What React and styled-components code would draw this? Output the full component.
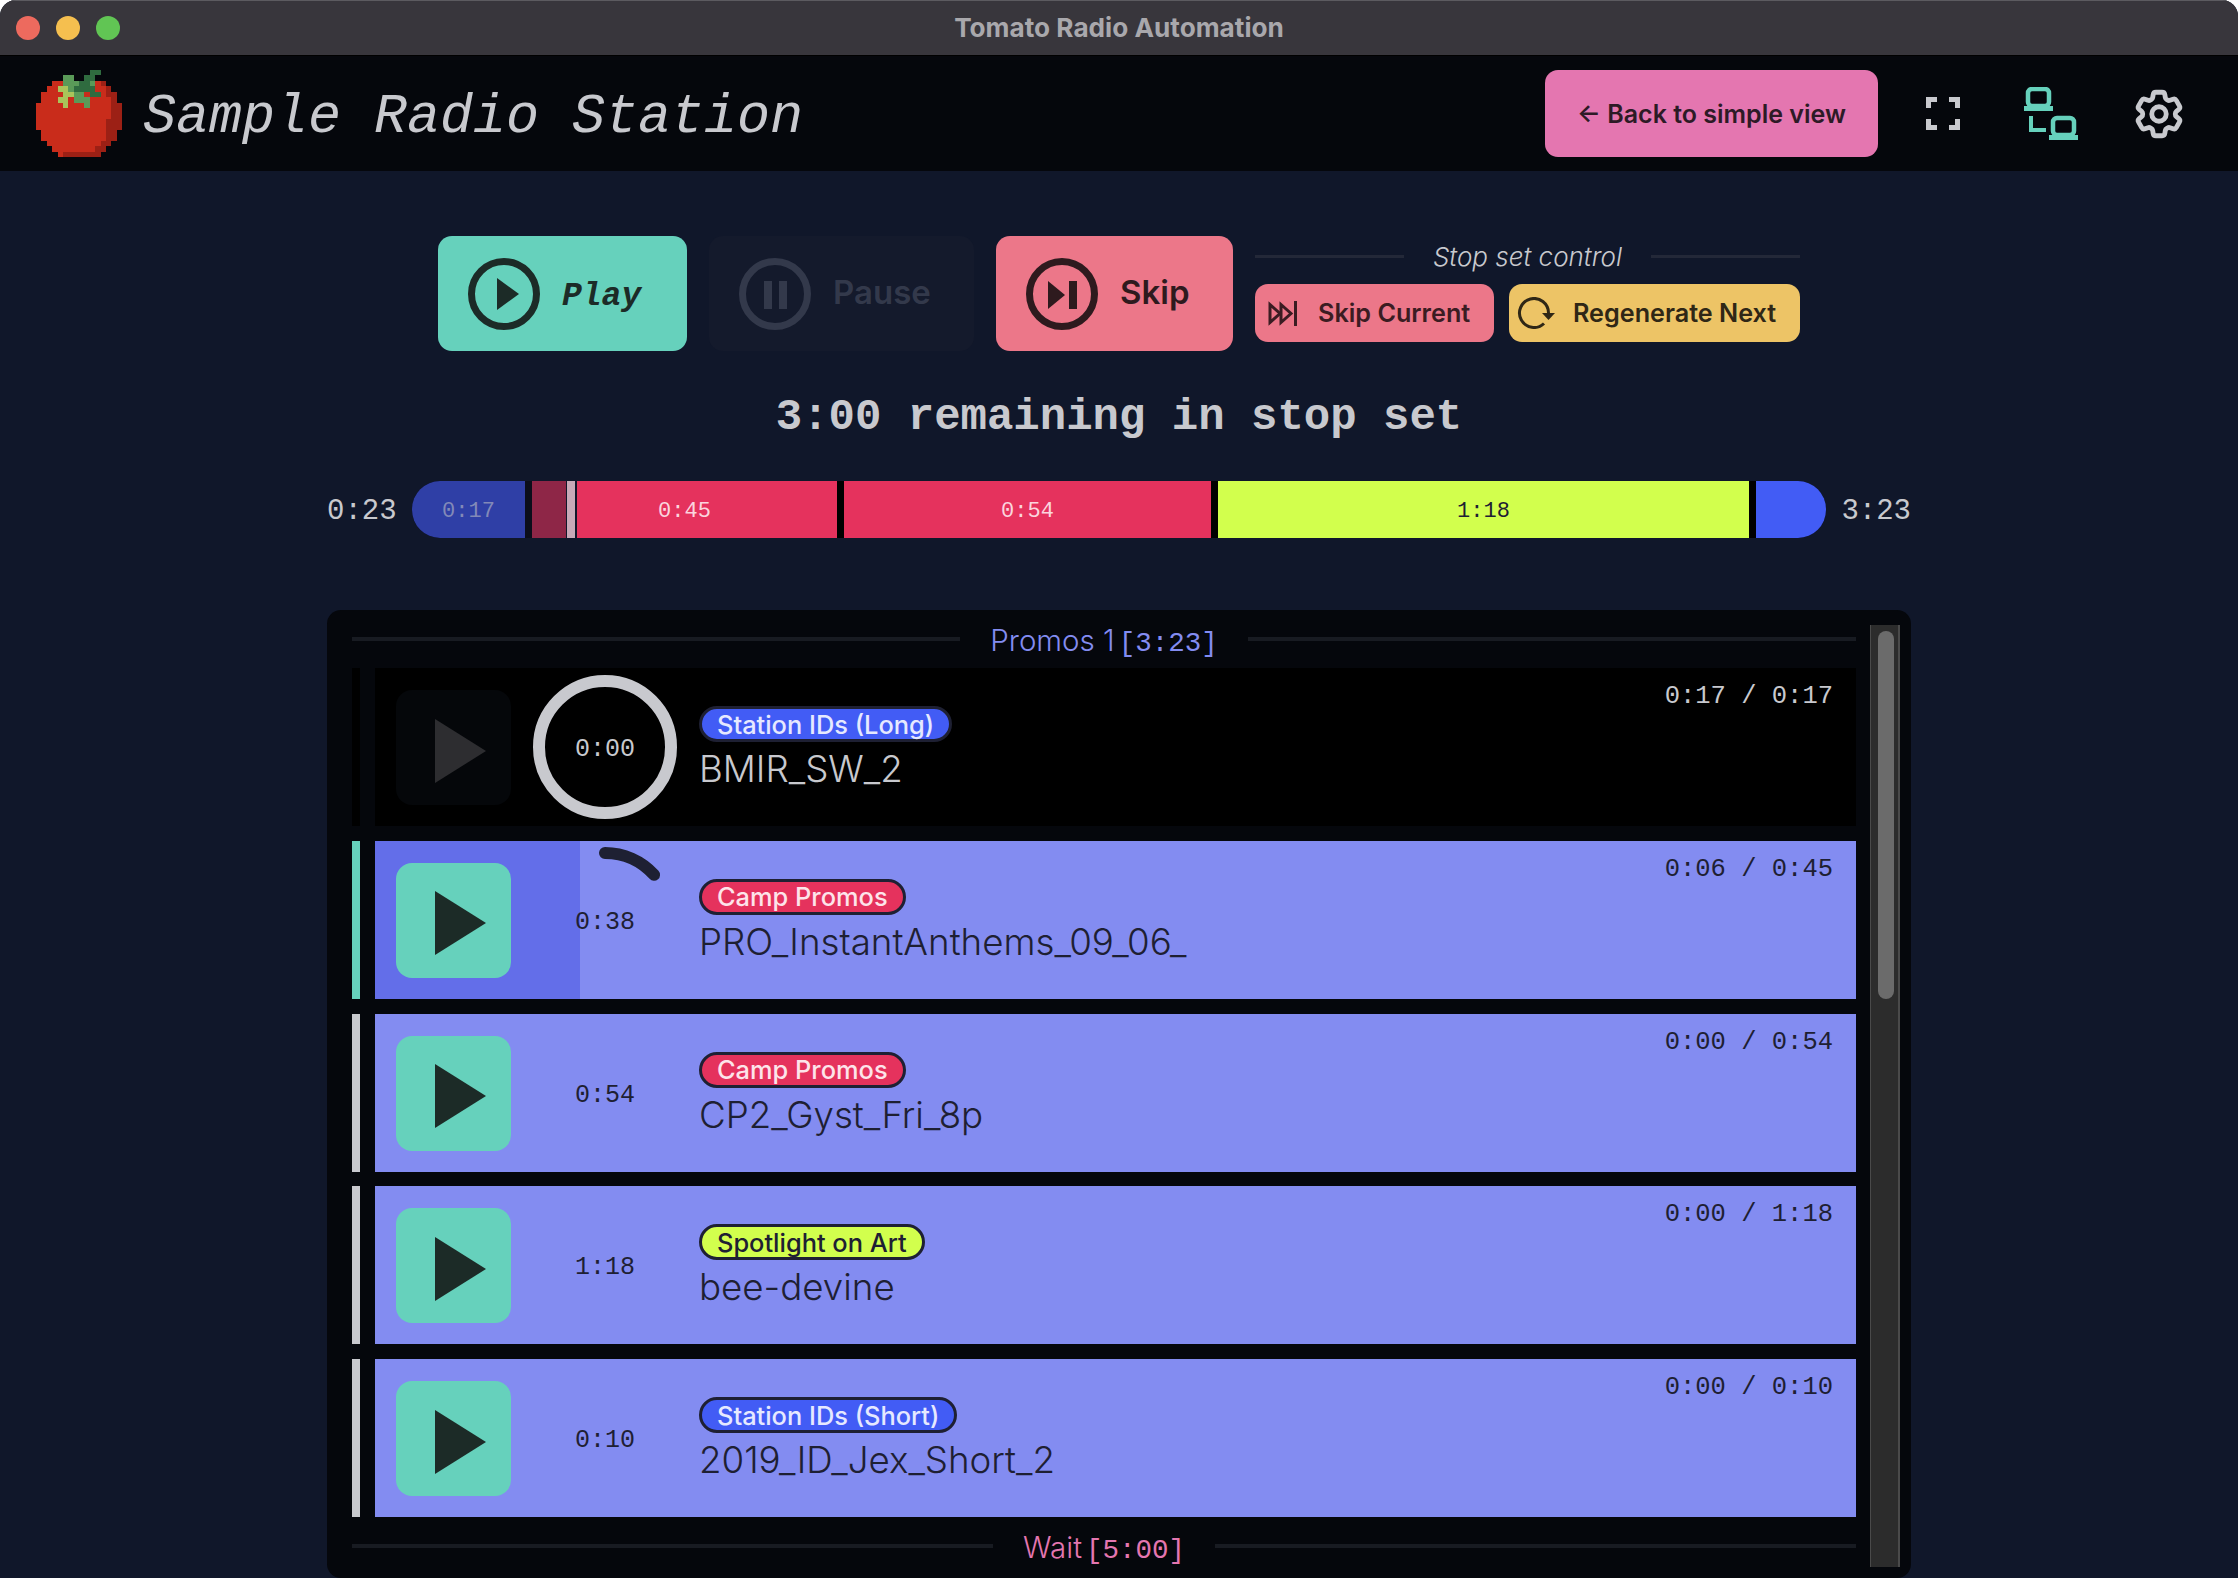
import React from "react";
import styled, { createGlobalStyle } from "styled-components";
import { HiOutlineCog6Tooth } from "react-icons/hi2";

const MONO = `"Liberation Mono", "DejaVu Sans Mono", monospace`;
const SANS = `Inter, "Noto Sans", sans-serif`;
const LIGHT = "#c8c9ce";
const TEAL = "#66d1bc";
const ROSE = "#ec7789";
const PINK = "#e476b0";
const RED = "#e5325d";
const BLUE = "#425cf5";
const LIME = "#d2ff4d";
const PERI = "#838cf1";
const INK = "#1e2033";

const Global = createGlobalStyle`
  html, body { margin: 0; padding: 0; background: #ffffff; }
  * { box-sizing: border-box; }
`;

const Window = styled.div`
  width: 2238px;
  height: 1578px;
  overflow: hidden;
  border-radius: 16px 16px 0 0;
  background: #10172a;
  display: flex;
  flex-direction: column;
  font-family: ${SANS};
`;

const TitleBar = styled.div`
  position: relative;
  height: 56px;
  flex: none;
  display: flex;
  align-items: center;
  justify-content: center;
  padding-bottom: 2px;
  background: #38363c;
  border-top: 1px solid #5c5b60;
  border-bottom: 1px solid #000;
`;

const Lights = styled.div`
  position: absolute;
  left: 16px;
  top: 15px;
  display: flex;
  gap: 16px;
`;

const Light = styled.span`
  width: 24px;
  height: 24px;
  border-radius: 50%;
  background: ${(p) => p.$c};
`;

const WindowTitle = styled.div`
  font-size: 26.2px;
  font-weight: 700;
  color: #a9a8ac;
`;

const Header = styled.header`
  height: 115px;
  flex: none;
  background: #05070c;
  display: flex;
  align-items: center;
  padding: 0 25px 0 36px;
`;

const Tomato = styled.svg`
  width: 86px;
  height: 87px;
  flex: none;
  margin-top: -1px;
  shape-rendering: crispEdges;
`;

const Station = styled.h1`
  margin: 8px 0 0 21px;
  font-family: ${MONO};
  font-style: italic;
  font-weight: 400;
  font-size: 55px;
  color: ${LIGHT};
  white-space: nowrap;
`;

const BackButton = styled.button`
  margin-left: auto;
  margin-right: 11px;
  width: 333px;
  height: 87px;
  border: 0;
  border-radius: 13px;
  background: ${PINK};
  color: #2d1a26;
  font-family: ${SANS};
  font-size: 25px;
  font-weight: 600;
  white-space: nowrap;
`;

const IconBox = styled.div`
  width: 108px;
  height: 108px;
  display: flex;
  align-items: center;
  justify-content: center;
  color: ${LIGHT};
`;

const GearBox = styled(IconBox)`
  svg path {
    stroke-width: 2;
  }
`;

const Main = styled.main`
  flex: 1;
  display: flex;
  flex-direction: column;
  align-items: center;
  padding-top: 65px;
  min-height: 0;
`;

const Controls = styled.div`
  display: flex;
  gap: 22px;
  align-items: flex-start;
`;

const BigButton = styled.button`
  width: ${(p) => p.$w}px;
  height: 115px;
  border: 0;
  border-radius: 14px;
  padding: 0 0 0 30px;
  display: flex;
  align-items: center;
  gap: 22px;
  background: ${(p) => p.$bg};
  color: ${(p) => p.$fg};
  font-family: ${SANS};
  font-size: 33px;
  font-weight: 600;
`;

const BigLabel = styled.span`
  margin-bottom: 3px;
`;

const PlayLabel = styled.span`
  margin-top: 5px;
  font-family: ${MONO};
  font-style: italic;
  font-weight: 700;
  font-size: 33px;
`;

const StopSet = styled.div`
  width: 545px;
  display: flex;
  flex-direction: column;
  gap: 8px;
`;

const Legend = styled.div`
  height: 40px;
  display: flex;
  align-items: center;
  gap: 29px;
  color: ${LIGHT};
  font-size: 26px;
  font-weight: 300;
  font-style: italic;
  white-space: nowrap;
`;

const Rule = styled.i`
  flex: 1;
  height: ${(p) => p.$h || 3}px;
  background: ${(p) => p.$c || "#232838"};
`;

const SmallRow = styled.div`
  display: flex;
  gap: 15px;
`;

const SmallButton = styled.button`
  width: ${(p) => p.$w}px;
  height: 58px;
  border: 0;
  border-radius: 13px;
  padding: 0 0 0 ${(p) => p.$pl}px;
  display: flex;
  align-items: center;
  gap: ${(p) => p.$gap}px;
  background: ${(p) => p.$bg};
  color: ${(p) => p.$fg};
  font-family: ${SANS};
  font-size: 25.2px;
  font-weight: 600;
  white-space: nowrap;
`;

const Remaining = styled.div`
  margin-top: 36px;
  height: 60px;
  line-height: 60px;
  font-family: ${MONO};
  font-weight: 700;
  font-size: 44px;
  color: ${LIGHT};
  white-space: nowrap;
`;

const BarRow = styled.div`
  margin-top: 34px;
  width: 1584px;
  display: flex;
  align-items: center;
`;

const BarTime = styled.div`
  width: ${(p) => p.$w}px;
  flex: none;
  padding-top: 4px;
  font-family: ${MONO};
  font-size: 29px;
  color: ${LIGHT};
  text-align: ${(p) => p.$a};
`;

const Bar = styled.div`
  width: 1414px;
  height: 57px;
  flex: none;
  display: flex;
  background: #000;
  border-radius: 28px;
  overflow: hidden;
`;

const Seg = styled.div`
  position: relative;
  width: ${(p) => p.$w}px;
  flex: none;
  margin-right: ${(p) => p.$gap || 0}px;
  padding-top: 3px;
  display: flex;
  align-items: center;
  justify-content: center;
  background: ${(p) => p.$bg};
  color: ${(p) => p.$fg};
  font-family: ${MONO};
  font-size: 22px;
`;

const SegText = styled.span`
  position: relative;
`;

const Played = styled.div`
  position: absolute;
  left: 0;
  top: 0;
  bottom: 0;
  width: 34px;
  background: #8e2647;
`;

const Marker = styled.div`
  position: absolute;
  left: 34px;
  top: 0;
  bottom: 0;
  width: 11px;
  background: #c8a9b8;
  border-left: 1px solid #10172a;
  border-right: 2px solid #10172a;
`;

const GapFill = styled.div`
  width: 7px;
  flex: none;
  background: #0b0e1b;
`;

const Panel = styled.section`
  margin-top: 72px;
  width: 1584px;
  flex: 1;
  min-height: 0;
  padding: 0 11px 11px 25px;
  background: #05070c;
  border-radius: 14px;
  display: flex;
  gap: 14px;
  overflow: hidden;
`;

const List = styled.div`
  width: 1504px;
  flex: none;
  display: flex;
  flex-direction: column;
`;

const SectionHead = styled.div`
  height: 58px;
  flex: none;
  display: flex;
  align-items: center;
  gap: 30px;
  color: ${(p) => p.$c};
  font-size: 29.5px;
  font-weight: 300;
  white-space: nowrap;
`;

const SectionLabel = styled.span`
  padding-top: 2px;
`;

const SectionMono = styled.span`
  font-family: ${MONO};
  font-size: 27.5px;
  margin-left: 4px;
`;

const Rows = styled.div`
  display: flex;
  flex-direction: column;
  gap: 14.75px;
`;

const Row = styled.div`
  height: 158px;
  display: flex;
  gap: 15px;
`;

const Stripe = styled.div`
  width: 8px;
  flex: none;
  background: ${(p) => p.$c};
`;

const Body = styled.div`
  position: relative;
  flex: 1;
  display: flex;
  padding-left: 21px;
  background: ${(p) => (p.$dark ? "#000" : PERI)};
  color: ${(p) => (p.$dark ? LIGHT : INK)};
`;

const Fill = styled.div`
  position: absolute;
  left: 0;
  top: 0;
  bottom: 0;
  background: #636ee9;
`;

const RowPlay = styled.button`
  position: relative;
  width: 115px;
  height: 115px;
  margin-top: 22px;
  flex: none;
  border: 0;
  padding: 0;
  border-radius: 16px;
  background: ${(p) => (p.$dark ? "#05070a" : TEAL)};
  display: flex;
  align-items: center;
  justify-content: center;
`;

const Dial = styled.div`
  position: relative;
  width: 144px;
  height: 144px;
  margin: 6.5px 22px 0;
  flex: none;
  padding-top: 6px;
  display: flex;
  align-items: center;
  justify-content: center;
  font-family: ${MONO};
  font-size: 25px;
`;

const DialRing = styled.svg`
  position: absolute;
  inset: 0;
`;

const DialText = styled.span`
  position: relative;
`;

const Info = styled.div`
  position: relative;
  padding-top: 38px;
  display: flex;
  flex-direction: column;
  align-items: flex-start;
  gap: 6px;
`;

const Tag = styled.span`
  height: 36px;
  padding: 0 15px;
  display: inline-flex;
  align-items: center;
  border: 3px solid ${INK};
  border-radius: 18px;
  background: ${(p) => p.$bg};
  color: ${(p) => p.$fg};
  font-size: 25.4px;
  font-weight: 500;
  white-space: nowrap;
`;

const Name = styled.div`
  font-size: 36.7px;
  font-weight: 300;
  line-height: 42px;
  white-space: nowrap;
`;

const RowTime = styled.div`
  position: relative;
  margin-left: auto;
  padding: 12px 23px 0 0;
  font-family: ${MONO};
  font-size: 25.5px;
  line-height: 34px;
  white-space: pre;
`;

const Track = styled.div`
  width: 30px;
  margin-top: 15px;
  flex: none;
  padding: 6px 7px 0;
  background: #2c2c2c;
  border-left: 1px solid #4a4a4a;
  border-right: 2px solid #4a4a4a;
`;

const Thumb = styled.div`
  width: 16px;
  height: 368px;
  border-radius: 8px;
  background: #6b6b6b;
`;

const TOMATO = [
  "..........DD....",
  ".....GG..DD.....",
  "...RRGGGDDGRX...",
  "..RRYYGDDDDRRX..",
  ".RRRRYYGGRDDRXX.",
  ".RRRYYRGGGRRRRX.",
  "RRRRRYRRRGRRRRXX",
  "RRRRRRRRRRRRRRXX",
  "RRRRRRRRRRRRRRXX",
  "RRRRRRRRRRRRRXXX",
  "RRRRRRRRRRRRRXXX",
  ".RRRRRRRRRRRRXX.",
  ".RRRRRRRRRRRRXX.",
  "..RRRRRRRRRRXX..",
  "...RRRRRRRRXX...",
  "....RXXXXXXX....",
];
const TC = { R: "#c92c1b", X: "#9c2015", G: "#5a9a58", D: "#2f6b3f", Y: "#a9c55a" };

const TomatoIcon = () => (
  <Tomato viewBox="0 0 16 16" preserveAspectRatio="none">
    {TOMATO.flatMap((line, y) =>
      [...line].map((ch, x) =>
        ch === "." ? null : <rect key={`${x}-${y}`} x={x} y={y} width="1" height="1" fill={TC[ch]} />
      )
    )}
  </Tomato>
);

const FullscreenIcon = () => (
  <svg width="34" height="33" viewBox="0 0 34 33" fill="none" stroke="currentColor" strokeWidth="5">
    <path d="M2.5 11V2.5H11M23 2.5H31.5V11M2.5 22V30.5H11M23 30.5H31.5V22" />
  </svg>
);

const Computer = ({ x, y }) => (
  <g transform={`translate(${x} ${y})`}>
    <rect x="4" y="2" width="21" height="17" rx="4" fill="none" stroke={TEAL} strokeWidth="4.5" />
    <rect x="0" y="19" width="29" height="5" fill={TEAL} />
  </g>
);

const NetworkIcon = () => (
  <svg width="54" height="53" viewBox="0 0 54 53" fill="none">
    <Computer x={0} y={0} />
    <Computer x={25} y={29} />
    <path d="M7 29V43H22" stroke={TEAL} strokeWidth="4" />
  </svg>
);

const CircleIcon = ({ c, children }) => (
  <svg width="72" height="72" viewBox="0 0 72 72" style={{ flex: "none" }}>
    <circle cx="36" cy="36" r="32.5" fill="none" stroke={c} strokeWidth="7" />
    <g fill={c}>{children}</g>
  </svg>
);

const SkipCurrentIcon = ({ c }) => (
  <svg width="29" height="25" viewBox="0 0 29 25" fill="none" stroke={c} strokeWidth="3" style={{ flex: "none" }}>
    <path d="M2 3.5L12 12.5L2 21.5Z" />
    <path d="M13 3.5L23 12.5L13 21.5Z" />
    <path d="M27.5 0V25" strokeWidth="3" />
  </svg>
);

const RegenIcon = ({ c }) => (
  <svg width="38" height="32" viewBox="0 0 38 32" fill="none" style={{ flex: "none" }}>
    <path d="M31.5 16A14.5 14.5 0 1 0 27 26.5" stroke={c} strokeWidth="3" />
    <path d="M25 16H38L31.5 23Z" fill={c} />
  </svg>
);

const Triangle = ({ c }) => (
  <svg width="51" height="64" viewBox="0 0 51 64" style={{ marginLeft: 13, marginTop: 6 }}>
    <path d="M0 0L51 32L0 64Z" fill={c} />
  </svg>
);

const ITEMS = [
  { stripe: "#000", dark: true, tag: "Station IDs (Long)", bg: BLUE, fg: "#e6e9ff", name: "BMIR_SW_2", left: "0:00", time: "0:17 / 0:17", arc: 360 },
  { stripe: TEAL, tag: "Camp Promos", bg: RED, fg: "#fde4ea", name: "PRO_InstantAnthems_09_06_", left: "0:38", time: "0:06 / 0:45", arc: 48, fill: 205 },
  { stripe: LIGHT, tag: "Camp Promos", bg: RED, fg: "#fde4ea", name: "CP2_Gyst_Fri_8p", left: "0:54", time: "0:00 / 0:54" },
  { stripe: LIGHT, tag: "Spotlight on Art", bg: LIME, fg: INK, name: "bee-devine", left: "1:18", time: "0:00 / 1:18" },
  { stripe: LIGHT, tag: "Station IDs (Short)", bg: BLUE, fg: "#e6e9ff", name: "2019_ID_Jex_Short_2", left: "0:10", time: "0:00 / 0:10" },
];

const arcPath = (deg) => {
  const r = (deg * Math.PI) / 180;
  return `M72 6A66 66 0 0 1 ${72 + 66 * Math.sin(r)} ${72 - 66 * Math.cos(r)}`;
};

const Ring = ({ item }) =>
  item.arc === 360 ? (
    <DialRing width="144" height="144" viewBox="0 0 144 144">
      <circle cx="72" cy="72" r="66" fill="none" stroke={LIGHT} strokeWidth="12" />
    </DialRing>
  ) : item.arc ? (
    <DialRing width="144" height="144" viewBox="0 0 144 144">
      <path d={arcPath(item.arc)} fill="none" stroke={INK} strokeWidth="12" strokeLinecap="round" />
    </DialRing>
  ) : null;

const Item = ({ item }) => (
  <Row>
    <Stripe $c={item.stripe} />
    <Body $dark={item.dark}>
      {item.fill ? <Fill style={{ width: item.fill }} /> : null}
      <RowPlay $dark={item.dark}>
        <Triangle c={item.dark ? "#2d2d30" : "#1c2b27"} />
      </RowPlay>
      <Dial>
        <Ring item={item} />
        <DialText>{item.left}</DialText>
      </Dial>
      <Info>
        <Tag $bg={item.bg} $fg={item.fg}>{item.tag}</Tag>
        <Name>{item.name}</Name>
      </Info>
      <RowTime>{item.time}</RowTime>
    </Body>
  </Row>
);

export default function App() {
  return (
    <Window>
      <Global />
      <TitleBar>
        <Lights>
          <Light $c="#ed6a5e" />
          <Light $c="#f5bf4f" />
          <Light $c="#61c554" />
        </Lights>
        <WindowTitle>Tomato Radio Automation</WindowTitle>
      </TitleBar>
      <Header>
        <TomatoIcon />
        <Station>Sample Radio Station</Station>
        <BackButton>← Back to simple view</BackButton>
        <IconBox><FullscreenIcon /></IconBox>
        <IconBox><NetworkIcon /></IconBox>
        <GearBox><HiOutlineCog6Tooth size={58} /></GearBox>
      </Header>
      <Main>
        <Controls>
          <BigButton $w={249} $bg={TEAL} $fg="#1c2b27">
            <CircleIcon c="#1c2b27"><path d="M29 20L51 36L29 52Z" /></CircleIcon>
            <PlayLabel>Play</PlayLabel>
          </BigButton>
          <BigButton $w={265} $bg="#141a2c" $fg="#33394b">
            <CircleIcon c="#33394b">
              <rect x="25" y="23" width="8" height="28" />
              <rect x="40" y="23" width="8" height="28" />
            </CircleIcon>
            <BigLabel>Pause</BigLabel>
          </BigButton>
          <BigButton $w={237} $bg={ROSE} $fg="#2e1a1e">
            <CircleIcon c="#2e1a1e">
              <path d="M22 23L39 37L22 51Z" />
              <rect x="43" y="23" width="8" height="28" />
            </CircleIcon>
            <BigLabel>Skip</BigLabel>
          </BigButton>
          <StopSet>
            <Legend>
              <Rule />
              Stop set control
              <Rule />
            </Legend>
            <SmallRow>
              <SmallButton $w={239} $pl={13} $gap={21} $bg={ROSE} $fg="#3b1c22">
                <SkipCurrentIcon c="#3b1c22" />
                Skip Current
              </SmallButton>
              <SmallButton $w={291} $pl={8} $gap={18} $bg="#edc466" $fg="#2f2716">
                <RegenIcon c="#2f2716" />
                Regenerate Next
              </SmallButton>
            </SmallRow>
          </StopSet>
        </Controls>
        <Remaining>3:00 remaining in stop set</Remaining>
        <BarRow>
          <BarTime $w={85} $a="left">0:23</BarTime>
          <Bar>
            <Seg $w={113} $bg="#2f3fa6" $fg="#8289b8">0:17</Seg>
            <GapFill />
            <Seg $w={305} $gap={7} $bg={RED} $fg="#fbd5de">
              <Played />
              <Marker />
              <SegText>0:45</SegText>
            </Seg>
            <Seg $w={367} $gap={7} $bg={RED} $fg="#fbd5de">0:54</Seg>
            <Seg $w={531} $gap={7} $bg={LIME} $fg={INK}>1:18</Seg>
            <Seg $w={70} $bg={BLUE} />
          </Bar>
          <BarTime $w={85} $a="right">3:23</BarTime>
        </BarRow>
        <Panel>
          <List>
            <SectionHead $c={PERI}>
              <Rule $h={4} $c="#181b22" />
              <SectionLabel>Promos 1<SectionMono>[3:23]</SectionMono></SectionLabel>
              <Rule $h={4} $c="#181b22" />
            </SectionHead>
            <Rows>
              {ITEMS.map((it) => <Item key={it.name} item={it} />)}
            </Rows>
            <SectionHead $c={PINK}>
              <Rule $h={4} $c="#181b22" />
              <SectionLabel>Wait<SectionMono>[5:00]</SectionMono></SectionLabel>
              <Rule $h={4} $c="#181b22" />
            </SectionHead>
          </List>
          <Track><Thumb /></Track>
        </Panel>
      </Main>
    </Window>
  );
}
